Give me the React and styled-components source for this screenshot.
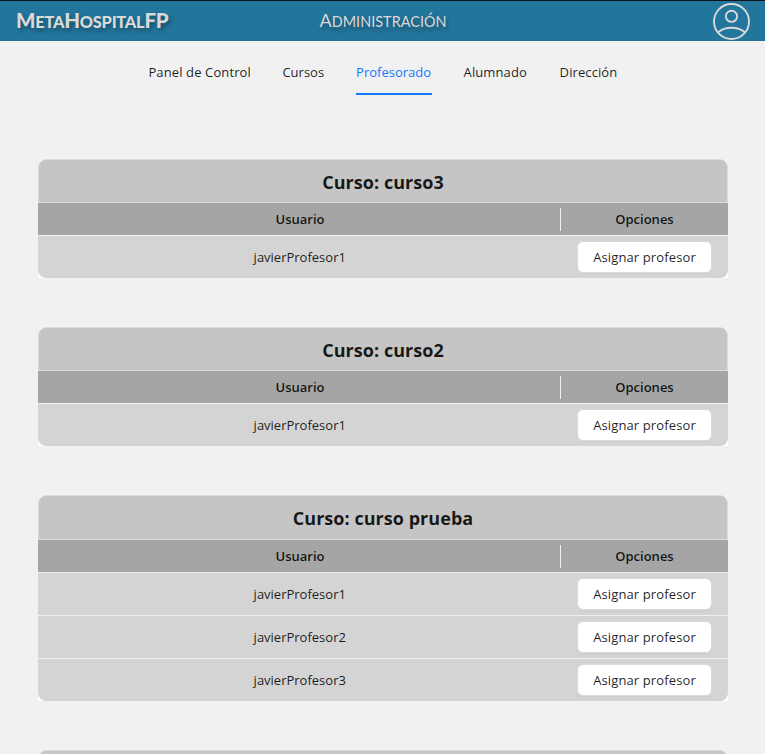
import React from 'react';
import styled, { createGlobalStyle } from 'styled-components';

const GlobalStyle = createGlobalStyle`
  * { box-sizing: border-box; }
  body {
    margin: 0;
    background: #f1f1f1;
    color: rgba(0, 0, 0, 0.88);
    font: 14px/22px "Open Sans", "Noto Sans", sans-serif;
    overflow: hidden;
  }
`;

const Page = styled.div`
  height: 754px;
  overflow: hidden;
`;

const Header = styled.header`
  display: grid;
  grid-template-columns: 1fr auto 1fr;
  align-items: center;
  height: 41px;
  padding: 0 15px 0 16px;
  border-top: 1px solid #12131c;
  background: #22759b;
  color: #d9d9d9;
  font-family: Lato, sans-serif;
  text-shadow: 2px 3px 4px rgba(0, 0, 0, 0.35);
`;

const Brand = styled.span`
  font-size: 20.5px;
  font-weight: 900;
  letter-spacing: -0.25px;
`;

const Section = styled.span`
  font-size: 18px;
  letter-spacing: 0.05px;
`;

const Small = styled.span`
  font-size: 0.8em;
  text-transform: uppercase;
`;

const ProfileIcon = styled.svg`
  display: block;
  width: 38px;
  height: 38px;
  justify-self: end;
  fill: none;
  stroke: #d9d9d9;
  stroke-width: 1.9;
`;

const Tabs = styled.nav`
  display: flex;
  gap: 32px;
  width: max-content;
  height: 54px;
  margin: 0 auto;
  border-bottom: 1px solid #eeeeee;
`;

const Tab = styled.a`
  width: ${(p) => p.$width}px;
  height: 54px;
  padding-top: 20px;
  font-size: 13px;
  letter-spacing: ${(p) => p.$spacing || 0}px;
  white-space: nowrap;
  color: ${(p) => (p.$active ? '#1677ff' : 'inherit')};
  border-bottom: 2px solid ${(p) => (p.$active ? '#1677ff' : 'transparent')};
`;

const Courses = styled.main`
  display: flex;
  flex-direction: column;
  gap: 48.95px;
  padding: 63.6px 37px 0 38px;
`;

const Card = styled.section`
  border-radius: 8px 8px 0 0;
  background: #ffffff;
`;

const CardTitle = styled.h2`
  height: 44.4px;
  margin: 0;
  border: 1px solid #dddddd;
  border-radius: 8px 8px 0 0;
  background: #c5c5c5;
  text-align: center;
  font-size: 18px;
  font-weight: 700;
  line-height: 45px;
  letter-spacing: 0.04px;
`;

const Row = styled.div`
  display: grid;
  grid-template-columns: 523px 167px;
  align-items: center;
  justify-items: center;
  height: 43px;
  border-bottom: 1px solid #f0f0f0;
  background: #d4d4d4;
  background-clip: padding-box;
  font-size: 13px;

  &:last-child {
    height: 42px;
    border-radius: 0 0 8px 8px;
    border-bottom: 0;
  }
`;

const HeadRow = styled(Row)`
  height: 33px;
  background: #a5a5a5;
  background-clip: padding-box;
  font-weight: 600;
`;

const HeadCell = styled.span`
  width: 100%;
  height: 23px;
  margin-top: 1px;
  line-height: 23px;
  text-align: center;
  border-right: ${(p) => (p.$divider ? '1px solid #f0f0f0' : '0')};
  padding-left: ${(p) => (p.$divider ? 2 : 0)}px;
`;

const UserName = styled.span`
  padding-left: 0.5px;
`;

const AssignButton = styled.button`
  width: 135px;
  height: 32px;
  padding: 0;
  border: 1px solid #d9d9d9;
  border-radius: 6px;
  background: #ffffff;
  box-shadow: 0 2px 0 rgba(0, 0, 0, 0.02);
  color: inherit;
  font: inherit;
  letter-spacing: 0.12px;
  white-space: nowrap;
`;

const tabs = [
  { label: 'Panel de Control', width: 102, spacing: 0.12 },
  { label: 'Cursos', width: 41.7 },
  { label: 'Profesorado', width: 75.5, active: true },
  { label: 'Alumnado', width: 64, spacing: 0.1 },
  { label: 'Dirección', width: 57, spacing: 0.1 },
];

const courses = [
  { name: 'curso3', users: ['javierProfesor1'] },
  { name: 'curso2', users: ['javierProfesor1'] },
  { name: 'curso prueba', users: ['javierProfesor1', 'javierProfesor2', 'javierProfesor3'] },
];

export default function App() {
  return (
    <Page>
      <GlobalStyle />
      <Header>
        <Brand>
          M<Small>eta</Small>H<Small>ospital</Small>FP
        </Brand>
        <Section>
          A<Small>dministración</Small>
        </Section>
        <ProfileIcon viewBox="-0.5 -0.5 38 38">
          <circle cx="19" cy="19" r="17.5" />
          <circle cx="19" cy="13.8" r="5.6" />
          <path d="M5.5 29.8C9.5 26.5 14 25.3 19 25.3s9.5 1.2 13.5 4.5" />
        </ProfileIcon>
      </Header>
      <Tabs>
        {tabs.map((t) => (
          <Tab key={t.label} $width={t.width} $spacing={t.spacing} $active={t.active}>
            {t.label}
          </Tab>
        ))}
      </Tabs>
      <Courses>
        {courses.map((course) => (
          <Card key={course.name}>
            <CardTitle>Curso: {course.name}</CardTitle>
            <HeadRow>
              <HeadCell $divider>Usuario</HeadCell>
              <HeadCell>Opciones</HeadCell>
            </HeadRow>
            {course.users.map((user) => (
              <Row key={user}>
                <UserName>{user}</UserName>
                <AssignButton>Asignar profesor</AssignButton>
              </Row>
            ))}
          </Card>
        ))}
        <Card>
          <CardTitle />
        </Card>
      </Courses>
    </Page>
  );
}
